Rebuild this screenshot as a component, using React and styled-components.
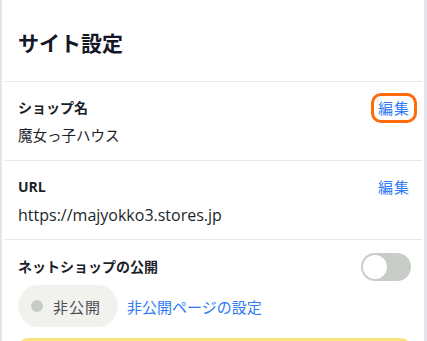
import React, { useState } from "react";
import styled, { createGlobalStyle } from "styled-components";

const Global = createGlobalStyle`
  html, body { margin: 0; padding: 0; background: #e5e6ed; overflow: hidden; }
  body { font-family: "Open Sans", "Noto Sans CJK JP", sans-serif; color: #1c1f2a; }
  * { box-sizing: border-box; }
`;

const Card = styled.div`
  margin-left: 2px;
  width: 422px;
  min-height: 341px;
  background: #ffffff;
  display: flex;
  flex-direction: column;
`;

const Title = styled.h1`
  margin: 0 2px 0 3px;
  padding: 28px 16px 23px 13px;
  font-size: 21px;
  line-height: 30px;
  font-weight: 700;
  color: #141826;
  border-bottom: 1px solid #e7e7e7;
`;

const Row = styled.section`
  margin: 0 2px 0 3px;
  padding: ${(p) => p.$pad || "16px 8px 12px 13px"};
  border-bottom: ${(p) => (p.$last ? "none" : "1px solid #e7e7e7")};
  display: flex;
  flex-direction: column;
  gap: ${(p) => p.$gap || "6px"};
`;

const RowHead = styled.div`
  display: flex;
  align-items: center;
  justify-content: space-between;
  min-height: 20px;
`;

const Label = styled.span`
  font-size: 14px;
  line-height: 20px;
  font-weight: 700;
  color: #1c1f2a;
`;

const Value = styled.div`
  font-size: ${(p) => (p.$latin ? "16px" : "14.5px")};
  line-height: 24px;
  color: #1c1f2a;
`;

const EditButton = styled.button`
  font-family: inherit;
  font-size: 15px;
  line-height: 20px;
  color: #2f7bf2;
  background: none;
  border: none;
  padding: 2px 4px;
  margin: -2px 0;
  border-radius: 7px;
  cursor: pointer;
  outline: ${(p) => (p.$focused ? "3px solid #ff6b0a" : "none")};
  outline-offset: 0;
  letter-spacing: 1px;
`;

const Toggle = styled.button`
  width: 50px;
  height: 28px;
  border-radius: 14px;
  border: none;
  padding: 2px;
  margin-right: 3px;
  background: ${(p) => (p.$on ? "#2f7bf2" : "#c9cdc7")};
  display: flex;
  justify-content: ${(p) => (p.$on ? "flex-end" : "flex-start")};
  cursor: pointer;
`;

const Knob = styled.span`
  width: 24px;
  height: 24px;
  border-radius: 50%;
  background: #ffffff;
`;

const StatusLine = styled.div`
  display: flex;
  align-items: center;
  gap: 9px;
`;

const Pill = styled.div`
  display: inline-flex;
  align-items: center;
  gap: 10px;
  height: 42px;
  padding: 0 17px 0 13px;
  border-radius: 21px;
  background: #f1f1ed;
  font-size: 15px;
  color: #4a4d55;
  letter-spacing: 1px;
`;

const Dot = styled.span`
  width: 12px;
  height: 12px;
  border-radius: 50%;
  background: #c8ccc6;
`;

const Link = styled.a`
  font-size: 15px;
  color: #2f7bf2;
  text-decoration: none;
  cursor: pointer;
`;

const Notice = styled.div`
  margin-top: 7px;
  margin-right: 3px;
  height: 60px;
  border-radius: 10px;
  border: 3px solid #f9e37c;
  background: #fff7cf;
`;

export default function App() {
  const [on, setOn] = useState(false);
  return (
    <>
      <Global />
      <Card>
        <Title>サイト設定</Title>
        <Row>
          <RowHead>
            <Label>ショップ名</Label>
            <EditButton $focused>編集</EditButton>
          </RowHead>
          <Value>魔女っ子ハウス</Value>
        </Row>
        <Row>
          <RowHead>
            <Label>URL</Label>
            <EditButton>編集</EditButton>
          </RowHead>
          <Value $latin>https://majyokko3.stores.jp</Value>
        </Row>
        <Row $last $pad="13px 8px 0 13px" $gap="4px">
          <RowHead>
            <Label>ネットショップの公開</Label>
            <Toggle $on={on} onClick={() => setOn(!on)} aria-label="公開">
              <Knob />
            </Toggle>
          </RowHead>
          <StatusLine>
            <Pill>
              <Dot />
              非公開
            </Pill>
            <Link>非公開ページの設定</Link>
          </StatusLine>
          <Notice />
        </Row>
      </Card>
    </>
  );
}
